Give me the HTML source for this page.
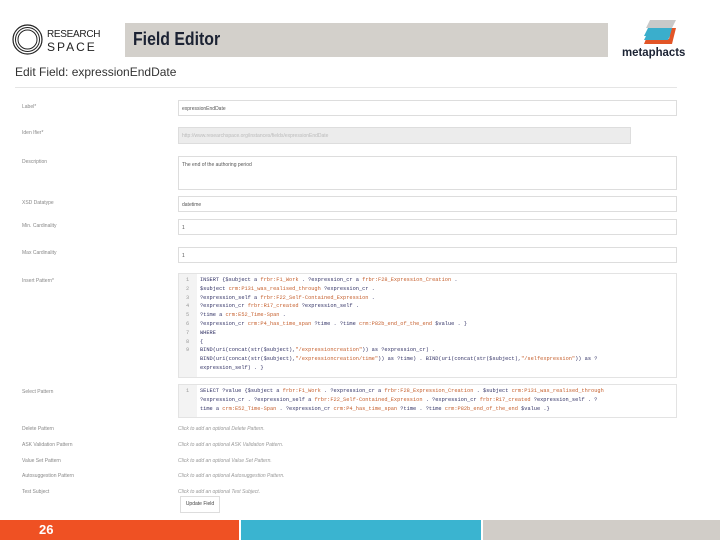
<!DOCTYPE html>
<html><head><meta charset="utf-8"><style>
*{margin:0;padding:0;box-sizing:border-box}
body{width:720px;height:540px;position:relative;background:#fff;font-family:"Liberation Sans",sans-serif;overflow:hidden}
.a{position:absolute}
.lbl{position:absolute;left:22px;font-size:5px;color:#888}
.inp{position:absolute;left:178px;width:499px;border:1px solid #ddd;background:#fff;font-size:5px;color:#555;padding:5px 3px}
.code{position:absolute;left:178px;width:499px;border:1px solid #e3e3e3;background:#fff;font-family:"Liberation Mono",monospace;font-size:5.3px;color:#336;line-height:8.8px}
.code .g{position:absolute;left:0;top:0;bottom:0;width:18px;background:#f3f3f3;}
.code .l{position:relative;padding-left:21px;white-space:nowrap}
.code .n{position:absolute;left:7px;color:#999}
.o{color:#c6602e}
.opt{position:absolute;left:178px;font-size:5px;color:#999;font-style:italic}
</style></head><body>
<svg class="a" style="left:12px;top:24px" width="31" height="31" viewBox="0 0 31 31"><g fill="none" stroke="#222"><circle cx="15.5" cy="15.5" r="14.5" stroke-width="1.2"/><circle cx="15.5" cy="15.5" r="12" stroke-width="1"/><circle cx="15.5" cy="15.5" r="9.5" stroke-width="1"/></g></svg>
<div class="a" style="left:47px;top:29px;font-size:10px;color:#222;letter-spacing:-0.3px">RESEARCH</div>
<div class="a" style="left:47px;top:40px;font-size:12px;color:#222;letter-spacing:2px">SPACE</div>
<div class="a" style="left:125px;top:23px;width:483px;height:34px;background:#d3d0cb"></div>
<div class="a" style="left:133px;top:29px;font-size:18px;font-weight:bold;color:#1b2233;transform:scaleX(0.88);transform-origin:left">Field Editor</div>
<svg class="a" style="left:642px;top:18px" width="40" height="30" viewBox="0 0 40 30"><polygon points="8,2 34,2 30,10 4,10" fill="#c9c9c9"/><polygon points="6,10 32,10 28,18 2,18" fill="#3aaecc"/><polygon points="30,10 34,10 30,26 2,26 4,21 27,21" fill="#e25527"/><polygon points="4,18 28,18 26,22 2,22" fill="#3aaecc"/></svg>
<div class="a" style="left:622px;top:45px;font-size:12px;font-weight:bold;color:#1b2233;transform:scaleX(0.95);transform-origin:left">metaphacts</div>
<div class="a" style="left:15px;top:65px;font-size:12px;color:#333">Edit Field: expressionEndDate</div>
<div class="a" style="left:15px;top:87px;width:662px;height:1px;background:#e5e5e5"></div>

<div class="lbl" style="top:104px">Label*</div>
<div class="inp" style="top:100px;height:16px">expressionEndDate</div>
<div class="lbl" style="top:130px">Iden Ifier*</div>
<div class="inp" style="top:127px;height:17px;width:453px;background:#ececec;color:#bbb">http://www.researchspace.org/instances/fields/expressionEndDate</div>
<div class="lbl" style="top:159px">Description</div>
<div class="inp" style="top:156px;height:34px">The end of the authoring period</div>
<div class="lbl" style="top:200px">XSD Datatype</div>
<div class="inp" style="top:196px;height:16px">datetime</div>
<div class="lbl" style="top:223px">Min. Cardinality</div>
<div class="inp" style="top:219px;height:16px">1</div>
<div class="lbl" style="top:250px">Max Cardinality</div>
<div class="inp" style="top:247px;height:16px">1</div>

<div class="lbl" style="top:278px">Insert Pattern*</div>
<div class="code" style="top:273px;height:105px;padding-top:2px"><div class="g"></div>
<div class="l"><span class="n">1</span>INSERT {$subject a <span class="o">frbr:F1_Work</span> . ?expression_cr a <span class="o">frbr:F28_Expression_Creation</span> .</div>
<div class="l"><span class="n">2</span>$subject <span class="o">crm:P131_was_realised_through</span> ?expression_cr .</div>
<div class="l"><span class="n">3</span>?expression_self a <span class="o">frbr:F22_Self-Contained_Expression</span> .</div>
<div class="l"><span class="n">4</span>?expression_cr <span class="o">frbr:R17_created</span> ?expression_self .</div>
<div class="l"><span class="n">5</span>?time a <span class="o">crm:E52_Time-Span</span> .</div>
<div class="l"><span class="n">6</span>?expression_cr <span class="o">crm:P4_has_time_span</span> ?time . ?time <span class="o">crm:P82b_end_of_the_end</span> $value . }</div>
<div class="l"><span class="n">7</span>WHERE</div>
<div class="l"><span class="n">8</span>{</div>
<div class="l"><span class="n">9</span>BIND(uri(concat(str($subject),<span class="o">"/expressioncreation"</span>)) as ?expression_cr) .</div>
<div class="l">BIND(uri(concat(str($subject),<span class="o">"/expressioncreation/time"</span>)) as ?time) . BIND(uri(concat(str($subject),<span class="o">"/selfexpression"</span>)) as ?</div>
<div class="l">expression_self) . }</div>
</div>
<div class="lbl" style="top:389px">Select Pattern</div>
<div class="code" style="top:384px;height:34px;padding-top:2px"><div class="g"></div>
<div class="l"><span class="n">1</span>SELECT ?value {$subject a <span class="o">frbr:F1_Work</span> . ?expression_cr a <span class="o">frbr:F28_Expression_Creation</span> . $subject <span class="o">crm:P131_was_realised_through</span></div>
<div class="l">?expression_cr . ?expression_self a <span class="o">frbr:F22_Self-Contained_Expression</span> . ?expression_cr <span class="o">frbr:R17_created</span> ?expression_self . ?</div>
<div class="l">time a <span class="o">crm:E52_Time-Span</span> . ?expression_cr <span class="o">crm:P4_has_time_span</span> ?time . ?time <span class="o">crm:P82b_end_of_the_end</span> $value .}</div>
</div>

<div class="lbl" style="top:426px">Delete Pattern</div><div class="opt" style="top:426px">Click to add an optional Delete Pattern.</div>
<div class="lbl" style="top:442px">ASK Validation Pattern</div><div class="opt" style="top:442px">Click to add an optional ASK Validation Pattern.</div>
<div class="lbl" style="top:458px">Value Set Pattern</div><div class="opt" style="top:458px">Click to add an optional Value Set Pattern.</div>
<div class="lbl" style="top:473px">Autosuggestion Pattern</div><div class="opt" style="top:473px">Click to add an optional Autosuggestion Pattern.</div>
<div class="lbl" style="top:489px">Test Subject</div><div class="opt" style="top:489px">Click to add an optional Test Subject.</div>
<div class="a" style="left:180px;top:496px;width:40px;height:17px;border:1px solid #ddd;font-size:5px;color:#444;text-align:center;line-height:15px">Update Field</div>

<div class="a" style="left:0;top:520px;width:239px;height:20px;background:#ef5123"></div>
<div class="a" style="left:241px;top:520px;width:240px;height:20px;background:#3ab4d0"></div>
<div class="a" style="left:483px;top:520px;width:237px;height:20px;background:#d1cdc8"></div>
<div class="a" style="left:39px;top:522px;font-size:13px;font-weight:bold;color:#fff">26</div>
</body></html>
